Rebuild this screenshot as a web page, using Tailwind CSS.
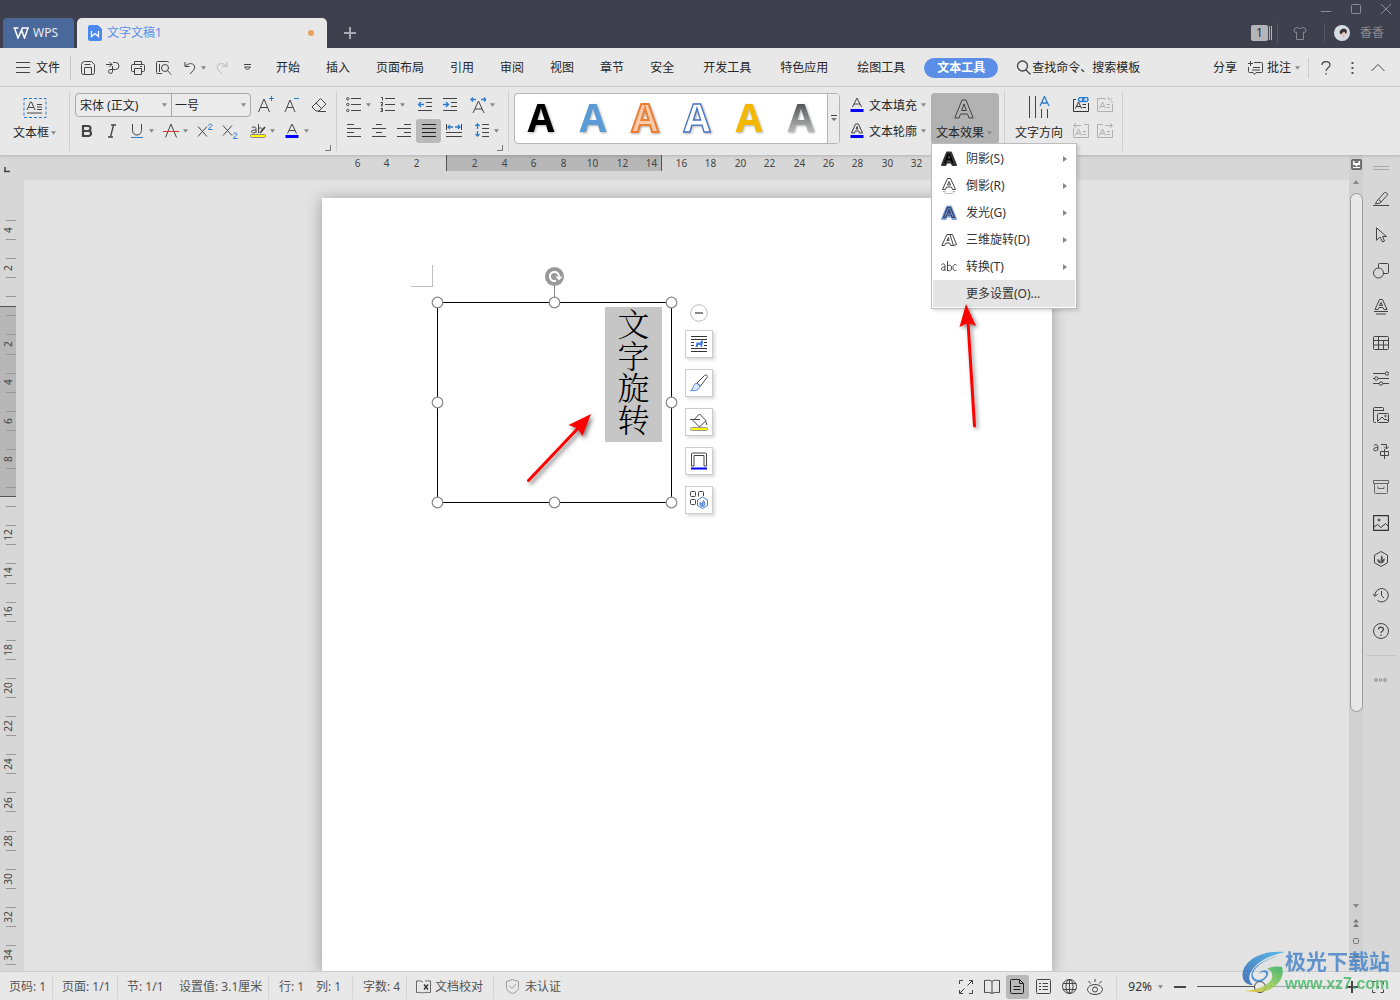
<!DOCTYPE html>
<html lang="zh-CN">
<head>
<meta charset="utf-8">
<title>文字文稿1 - WPS</title>
<script src="https://cdn.jsdelivr.net/npm/@tailwindcss/browser@4"></script>
</head>
<body class="flex h-screen flex-col overflow-hidden bg-[#e2e2e2] fill-none stroke-[#444] font-['Noto_Sans','Noto_Sans_CJK_SC',sans-serif] text-xs leading-4 text-[#262626]">
<svg class="hidden">
  <symbol id="caret" viewBox="0 0 6 4"><path d="M0 0h6L3 4z" fill="#888" stroke="none"/></symbol>
  <symbol id="sub" viewBox="0 0 4 6"><path d="M0 0v6l4-3z" fill="#888" stroke="none"/></symbol>
  <symbol id="corner" viewBox="0 0 6 6"><path d="M5.500 0v5.500H0" fill="none" stroke="#777"/></symbol>
  <symbol id="bigA" viewBox="0 0 20 20"><path d="M8 1h4l7.200 18h-4.200l-1.500-4h-7l-1.500 4H.8zM7.700 11.500h4.600L10 5z"/></symbol>
</svg>

<!-- Title bar -->
<header class="flex h-12 shrink-0 items-end justify-between bg-[#3e414d] text-white">
  <div class="flex items-end pl-[3px]">
    <button class="flex h-[30px] w-[71px] items-center gap-1 rounded-t-[4px] bg-[#4a6899] pl-[10px] text-[#e8ecf4]">
      <svg class="h-3 w-4 stroke-white" viewBox="0 0 16 12" stroke-width="1.500"><path d="M.5 1h5M1.500 1l3.500 10L8.500 3l3 8L15 1h-5.500L6 9"/></svg>
      WPS
    </button>
    <div class="ml-[3px] flex h-[30px] w-[250px] items-center rounded-t-[5px] bg-[#e8e8e8] pr-[13px] pl-[11px] text-[#5b8fe8]">
      <svg class="h-4 w-[14px] stroke-none" viewBox="0 0 14 16"><path d="M2 0h8l4 4v10a2 2 0 0 1-2 2H2a2 2 0 0 1-2-2V2a2 2 0 0 1 2-2z" fill="#4a88f0"/><path d="M3.500 6v5.500L7 8.500l3.500 3V6" fill="none" stroke="#fff" stroke-width="1.300"/></svg>
      <span class="ml-[5px] flex-1">文字文稿1</span>
      <span class="size-[6px] rounded-full bg-[#e8a05c]"></span>
    </div>
    <button class="flex h-[30px] w-[46px] items-center justify-center" aria-label="新建"><svg class="size-3 stroke-[#a9abb3]" viewBox="0 0 12 12" stroke-width="2"><path d="M6 0v12M0 6h12"/></svg></button>
  </div>
  <div class="flex h-full flex-col items-end">
    <div class="flex h-[18px] items-center gap-5 pr-[9px]">
      <button aria-label="最小化"><svg class="size-[10px] stroke-[#8b8d96]" viewBox="0 0 10 10"><path d="M0 7.500h10"/></svg></button>
      <button aria-label="最大化"><svg class="size-[10px] stroke-[#8b8d96]" viewBox="0 0 10 10"><rect x=".5" y=".5" width="9" height="9" rx="1"/></svg></button>
      <button aria-label="关闭"><svg class="size-[10px] stroke-[#8b8d96]" viewBox="0 0 10 10"><path d="M0 0l10 10M10 0L0 10"/></svg></button>
    </div>
    <div class="flex h-[30px] items-center pr-4">
      <span class="flex h-4 items-center"><span class="flex h-4 w-[17px] items-center justify-center rounded-[2px] bg-[#b5b5b9] text-[#333]">1</span><svg class="h-4 w-[5px] stroke-[#b5b5b9]" viewBox="0 0 5 16"><path d="M1.500 1v14M3.500 1v14"/></svg></span>
      <span class="ml-1 h-5 w-px bg-[#565965]"></span>
      <button class="ml-[15px]" aria-label="皮肤"><svg class="size-[14px] stroke-[#85878f]" viewBox="0 0 14 14"><path d="M4.500 1L.8 3.500l1.200 3 1.500-.5v7.500h7V6l1.500.5 1.200-3L9.500 1c-.8 2-4.200 2-5 0z"/></svg></button>
      <span class="ml-[17px] h-5 w-px bg-[#565965]"></span>
      <svg class="ml-[9px] size-4 stroke-none" viewBox="0 0 16 16"><circle cx="8" cy="8" r="8" fill="#d5dde2"/><path d="M5.500 7c1-3 4-4.500 6-3 2 1 1.500 4 .5 5l-1.500-2-2 1-2 1.500z" fill="#3b3438"/><path d="M8.500 7.500l1.500-.5 1 2-1 4-2-1.500z" fill="#e3b9ae"/></svg>
      <span class="ml-[10px] text-[#8b8d96]">香香</span>
    </div>
  </div>
</header>

<!-- Menu bar -->
<nav class="flex h-[39px] shrink-0 items-center border-b border-[#d0d0d0] bg-[#e8e8e8] pt-px pl-4 whitespace-nowrap">
  <button class="flex items-center gap-[6px]"><svg class="size-[14px]" viewBox="0 0 14 14"><path d="M0 1.500h14M0 6.500h14M0 11.500h14"/></svg>文件</button>
  <span class="ml-[10px] h-6 w-px bg-[#c4c4c4]"></span>
  <div class="ml-[10px] flex items-center gap-[11px]">
    <button aria-label="保存"><svg class="size-[14px]" viewBox="0 0 14 14"><path d="M.5 3.500a3 3 0 0 1 3-3h7l3 3v8a2 2 0 0 1-2 2h-9a2 2 0 0 1-2-2zM3.500 13V6.500h7V13M3.500 3.500h6"/></svg></button>
    <button aria-label="输出"><svg class="size-[14px]" viewBox="0 0 14 14"><path d="M0 3.500h6M3.500 1l2.500 2.500L3.500 6M7 1.500h2.500a3.500 3.500 0 0 1 0 7H4a2 2 0 1 0 2.500 2V5"/></svg></button>
    <button aria-label="打印"><svg class="size-[14px]" viewBox="0 0 14 14"><path d="M3.500 3.500v-3h7v3M3.500 10.500h-2a1 1 0 0 1-1-1v-5a1 1 0 0 1 1-1h11a1 1 0 0 1 1 1v5a1 1 0 0 1-1 1h-2M3.500 7.500h7v6h-7zM9 5.500h2"/></svg></button>
    <button aria-label="打印预览"><svg class="h-[14px] w-4" viewBox="0 0 16 14"><path d="M6 12.500H1.500a1 1 0 0 1-1-1v-10a1 1 0 0 1 1-1h10a1 1 0 0 1 1 1M3.500 3v8"/><circle cx="9" cy="7" r="3.500"/><path d="M11.500 9.500l3.500 4"/></svg></button>
  </div>
  <button class="ml-3 flex items-center gap-[5px]" aria-label="撤销"><svg class="size-3" viewBox="0 0 12 12"><path d="M1 0v4.500h4.500M1 4.500C4 1 9 .5 10.500 4c1 3-2 5-4.500 8"/></svg><svg class="h-1 w-[5px]"><use href="#caret"/></svg></button>
  <button class="ml-[10px]" aria-label="恢复"><svg class="size-3 stroke-[#bbb]" viewBox="0 0 12 12"><path d="M11 0v4.500H6.500M11 4.500C8 1 3 .5 1.500 4c-1 3 2 5 4.500 8"/></svg></button>
  <button class="ml-[15px]" aria-label="自定义"><svg class="h-[7px] w-[9px]" viewBox="0 0 9 7"><path d="M1 .5h7M1.500 3l3 3 3-3z"/></svg></button>
  <div class="ml-[24px] flex gap-[26px]"><button>开始</button><button>插入</button><button>页面布局</button><button>引用</button><button>审阅</button><button>视图</button><button>章节</button><button>安全</button></div>
  <div class="ml-[29px] flex gap-[29px]"><button>开发工具</button><button>特色应用</button><button>绘图工具</button></div>
  <button class="ml-[19px] h-5 w-[74px] rounded-full bg-[#5b8ee6] font-bold text-white">文本工具</button>
  <button class="ml-[18px] flex items-center gap-[1px]"><svg class="size-[15px]" viewBox="0 0 15 15" stroke-width="1.300"><circle cx="6.500" cy="6" r="5"/><path d="M10 10l4.500 4.500"/></svg>查找命令、搜索模板</button>
  <div class="ml-auto flex items-center pr-[15px]">
    <button>分享</button>
    <button class="ml-[11px] flex items-center gap-1"><svg class="h-[14px] w-[15px]" viewBox="0 0 15 14"><path d="M6 1.500h7.500a1 1 0 0 1 1 1v8a1 1 0 0 1-1 1H8l-1.500 2-1.500-2H1.500a1 1 0 0 1-1-1V6M0 2.500h5M2.500 0v5M5 6.500h7M4 9h8"/></svg>批注<svg class="h-1 w-[5px]"><use href="#caret"/></svg></button>
    <span class="ml-2 h-5 w-px bg-[#ccc]"></span>
    <button class="ml-[12px]" aria-label="帮助"><svg class="h-[14px] w-[10px]" viewBox="0 0 10 14" stroke-width="1.200"><path d="M1 4c0-4.500 8-4.500 8 0 0 2.500-4 3-4 6"/><path d="M5 12v1.500"/></svg></button>
    <button class="ml-5" aria-label="更多"><svg class="h-3 w-[3px] fill-[#555] stroke-none" viewBox="0 0 3 12"><path d="M.5 0h2v2h-2zM.5 5h2v2h-2zM.5 10h2v2h-2z"/></svg></button>
    <button class="ml-[17px]" aria-label="折叠功能区"><svg class="h-[9px] w-[14px]" viewBox="0 0 14 9"><path d="M.5 8L7 1.500 13.500 8"/></svg></button>
  </div>
</nav>

<!-- Ribbon -->
<section class="relative z-10 flex h-[68px] shrink-0 bg-[#e8e8e8] whitespace-nowrap shadow-[0_1px_3px_#0000002a]">
  <button class="flex w-[69px] flex-col items-center pt-[11px]">
    <svg class="h-5 w-6" viewBox="0 0 24 20"><rect x="1" y=".5" width="22" height="19" stroke="#2b7cd0" stroke-dasharray="3 2"/><path d="M4 12l3.500-8h1L12 12M5.500 9.500h5M14 6.500h5M14 9h5M14 11.500h5M4 15h15"/></svg>
    <span class="mt-[7px] flex items-center gap-[2px]">文本框<svg class="h-1 w-[5px]"><use href="#caret"/></svg></span>
  </button>
  <span class="my-1 w-px bg-[#cfcfcf]"></span>
  <div class="flex w-[266px] flex-col pt-[5px] pl-[5px]">
    <div class="flex h-[26px] items-center">
      <div class="flex h-6 w-[176px] rounded-[4px] border border-[#a8a8a8] bg-[#ebebeb]">
        <label class="flex w-24 items-center border-r border-[#a8a8a8] pr-1"><select aria-label="字体" class="min-w-0 flex-1 appearance-none bg-transparent pt-px pl-1 outline-none"><option>宋体 (正文)</option></select><svg class="h-1 w-[5px]"><use href="#caret"/></svg></label>
        <label class="flex flex-1 items-center pr-1"><select aria-label="字号" class="min-w-0 flex-1 appearance-none bg-transparent pt-px pl-[3px] outline-none"><option>一号</option></select><svg class="h-1 w-[5px]"><use href="#caret"/></svg></label>
      </div>
      <button class="ml-[2px] flex w-[26px] justify-center" aria-label="增大字号"><svg class="size-4 overflow-visible" viewBox="0 0 16 16"><path d="M.5 15L6 2l5.500 13M2.500 10.500h7"/><path d="M11 1.500h5M13.500-1v5" stroke="#2b7cd0"/></svg></button>
      <button class="flex w-[26px] justify-center" aria-label="减小字号"><svg class="size-4" viewBox="0 0 16 16"><path d="M1 15L6 3l5 12M3 10.500h6"/><path d="M10 1.500h5" stroke="#2b7cd0"/></svg></button>
      <button class="flex w-[28px] justify-center" aria-label="清除格式"><svg class="size-4" viewBox="0 0 16 16"><path d="M9.500 1.500l5.500 5.500-7 7H5L1 10zM5 6l5.500 5.500M7 14.500h8"/></svg></button>
    </div>
    <div class="flex h-[26px] items-center">
      <button class="flex w-6 justify-center" aria-label="加粗"><svg class="size-4" viewBox="0 0 16 16" stroke-width="2.200"><path d="M4 3h5a2.300 2.300 0 0 1 0 5H4zM4 8h5.500a2.500 2.500 0 0 1 0 5H4z"/></svg></button>
      <button class="flex w-[25px] justify-center" aria-label="倾斜"><svg class="size-4" viewBox="0 0 16 16" stroke-width="1.300"><path d="M7 2h5M4 14h5M9.500 2l-3 12"/></svg></button>
      <button class="flex w-[34px] items-center justify-center gap-1" aria-label="下划线"><svg class="size-4" viewBox="0 0 16 16"><path d="M3.500 1v6.500a4.500 4.500 0 0 0 9 0V1"/><path d="M2 14.500h12" stroke="#2b7cd0"/></svg><svg class="h-1 w-[5px]"><use href="#caret"/></svg></button>
      <button class="flex w-[34px] items-center justify-center gap-1" aria-label="删除线"><svg class="size-4" viewBox="0 0 16 16"><path d="M2.500 14.500L8 1l5.500 13.500"/><path d="M0 8.500h16" stroke="#d33"/></svg><svg class="h-1 w-[5px]"><use href="#caret"/></svg></button>
      <button class="flex w-[25px] justify-center" aria-label="上标"><svg class="size-4" viewBox="0 0 16 16"><path d="M1 3.500l9 10M10 3.500l-9 10"/><path d="M11.500 2.500c0-2 3.500-2 3.500 0 0 1-3.500 2-3.500 4H15.500" stroke="#2b7cd0"/></svg></button>
      <button class="flex w-[25px] justify-center" aria-label="下标"><svg class="size-4" viewBox="0 0 16 16"><path d="M1 2.500l9 10M10 2.500l-9 10"/><path d="M11.500 11.500c0-2 3.500-2 3.500 0 0 1-3.500 2-3.500 4H15.500" stroke="#2b7cd0"/></svg></button>
      <button class="ml-[3px] flex w-[34px] items-center justify-center gap-1" aria-label="突出显示"><svg class="size-4" viewBox="0 0 16 16"><path d="M2 5c0-1.500 4-1.500 4 .5V10M6 7C4 7 1.500 7 1.500 8.700 1.500 10.500 5 10.500 6 8.500M8.500 1v9M8.500 6c1-2 4-1.500 4 1.500"/><path d="M15 4l-5 6" stroke-width="1.800"/><rect x=".5" y="11.500" width="15" height="3" rx="1" fill="#ff0" stroke="#888"/></svg><svg class="h-1 w-[5px]"><use href="#caret"/></svg></button>
      <button class="flex w-[34px] items-center justify-center gap-1" aria-label="字体颜色"><svg class="size-4" viewBox="0 0 16 16"><path d="M3.500 10.500L8 1l4.500 9.500M5 7.500h6"/><path d="M1.500 13.500h13" stroke="#00f" stroke-width="3"/></svg><svg class="h-1 w-[5px]"><use href="#caret"/></svg></button>
    </div>
    <svg class="mt-px mr-[5px] size-[6px] self-end"><use href="#corner"/></svg>
  </div>
  <span class="my-1 w-px bg-[#cfcfcf]"></span>
  <div class="flex w-[171px] flex-col pt-[5px] pl-1">
    <div class="flex h-[26px] items-center">
      <button class="flex w-[34px] items-center justify-center gap-1" aria-label="项目符号"><svg class="size-4" viewBox="0 0 16 16"><path d="M5 1.500h10M5 7.500h10M5 13.500h10"/><circle cx="1.800" cy="1.800" r="1.200"/><circle cx="1.800" cy="7.500" r="1.200"/><circle cx="1.800" cy="13.500" r="1.200"/></svg><svg class="h-1 w-[5px]"><use href="#caret"/></svg></button>
      <button class="flex w-[34px] items-center justify-center gap-1" aria-label="编号"><svg class="size-4" viewBox="0 0 16 16"><path d="M5 1.500h10M5 7.500h10M5 13.500h10M1 .5h1.500v3M.5 5.500h2v2h-1v1.500h1.500M.5 11.500h2v3h-2M1 13h1.500"/></svg><svg class="h-1 w-[5px]"><use href="#caret"/></svg></button>
      <button class="ml-[3px] flex w-[25px] justify-center" aria-label="减少缩进"><svg class="size-4" viewBox="0 0 16 16"><path d="M1 1.500h14M9 5.500h6M9 9.500h6M1 13.500h14"/><path d="M7 7.500H1.500M4 5L1.500 7.500 4 10" stroke="#2b7cd0" stroke-width="1.300"/></svg></button>
      <button class="flex w-[25px] justify-center" aria-label="增加缩进"><svg class="size-4" viewBox="0 0 16 16"><path d="M1 1.500h14M9 5.500h6M9 9.500h6M1 13.500h14"/><path d="M1 7.500h5.500M4 5l2.500 2.500L4 10" stroke="#2b7cd0" stroke-width="1.300"/></svg></button>
      <button class="ml-[3px] flex w-[34px] items-center justify-center gap-1" aria-label="字符缩放"><svg class="size-4" viewBox="0 0 16 16"><path d="M3 16L8.500 4 14 16M5 12h7"/><path d="M6 2.500H1M3 .5l-2 2 2 2M11 2.500h5M14 .5l2 2-2 2" stroke="#2b7cd0" stroke-width="1.300"/></svg><svg class="h-1 w-[5px]"><use href="#caret"/></svg></button>
    </div>
    <div class="flex h-[26px] items-center">
      <button class="flex w-[25px] justify-center" aria-label="左对齐"><svg class="size-4" viewBox="0 0 16 16"><path d="M1 1.500h7M1 5.500h14M1 9.500h7M1 13.500h14"/></svg></button>
      <button class="flex w-[25px] justify-center" aria-label="居中"><svg class="size-4" viewBox="0 0 16 16"><path d="M5 1.500h6M1 5.500h14M5 9.500h6M1 13.500h14"/></svg></button>
      <button class="flex w-[25px] justify-center" aria-label="右对齐"><svg class="size-4" viewBox="0 0 16 16"><path d="M8 1.500h7M1 5.500h14M8 9.500h7M1 13.500h14"/></svg></button>
      <button class="flex h-6 w-[25px] items-center justify-center rounded-[3px] bg-[#b9b9b9] stroke-[#222]" aria-label="两端对齐"><svg class="size-4" viewBox="0 0 16 16"><path d="M1 1.500h14M1 5.500h14M1 9.500h14M1 13.500h14"/></svg></button>
      <button class="flex w-[25px] justify-center" aria-label="分散对齐"><svg class="size-4" viewBox="0 0 16 16"><path d="M.5 1v6M15.500 1v6M0 9.500h16M0 13.500h16"/><path d="M7 4H2M4 2L2 4l2 2M9 4h5M12 2l2 2-2 2" stroke="#2b7cd0" stroke-width="1.300"/></svg></button>
      <button class="ml-[3px] flex w-[34px] items-center justify-center gap-1" aria-label="行距"><svg class="size-4" viewBox="0 0 16 16"><path d="M8 1.500h7M8 5.500h7M8 9.500h7M8 13.500h7"/><path d="M3.500 1v5M1.500 3l2-2 2 2M3.500 8v5M1.500 11l2 2 2-2" stroke="#2b7cd0" stroke-width="1.300"/></svg><svg class="h-1 w-[5px]"><use href="#caret"/></svg></button>
    </div>
    <svg class="mt-px mr-[5px] size-[6px] self-end"><use href="#corner"/></svg>
  </div>
  <span class="my-1 w-px bg-[#cfcfcf]"></span>
  <div class="mt-[6px] ml-[5px] flex h-[51px] w-[326px] rounded-[4px] border border-[#b5b5b5] bg-white">
    <svg class="h-[49px] w-[312px] overflow-visible font-['Open_Sans'] text-[39px] font-bold drop-shadow-[1px_1px_1px_#00000050]" viewBox="0 0 312 49" text-anchor="middle">
      <defs><linearGradient id="gray" x1="0" y1="0" x2="0" y2="1"><stop offset=".25" stop-color="#505254"/><stop offset=".8" stop-color="#bbb"/></linearGradient></defs>
      <g stroke="none"><text x="26" y="38" fill="#000">A</text><text x="78" y="38" fill="#5b9bd5">A</text><text x="130" y="38" fill="#f8cbad" stroke="#ed7d31" stroke-width="2">A</text><text x="182" y="38" fill="#fff" stroke="#4472c4" stroke-width="1.300">A</text><text x="234" y="38" fill="#f5b800">A</text><text x="286" y="38" fill="url(#gray)">A</text></g>
    </svg>
    <button class="flex flex-1 items-center justify-center rounded-r-[3px] border-l border-[#b5b5b5] bg-[#ebebeb]" aria-label="更多样式"><svg class="h-[7px] w-[6px]" viewBox="0 0 6 7"><path d="M0 .5h6"/><path d="M0 3h6L3 6z" fill="#777" stroke="none"/></svg></button>
  </div>
  <div class="flex w-[91px] flex-col pt-[5px] pl-[10px]">
    <button class="flex h-[26px] items-center"><svg class="h-4 w-[14px]" viewBox="0 0 14 16"><path d="M2.500 10L7 1l4.500 9M4 7h6"/><path d="M.5 13.500h13" stroke="#00f" stroke-width="3"/></svg><span class="mr-1 ml-[5px] pt-px">文本填充</span><svg class="h-1 w-[5px]"><use href="#caret"/></svg></button>
    <button class="flex h-[26px] items-center"><svg class="h-4 w-[14px]" viewBox="0 0 14 16"><path d="M1.500 10L5.500 1h3l4 9h-3L8.800 8H5.200l-.7 2zM6 6h2L7 3.500z"/><path d="M.5 13.500h13" stroke="#00f" stroke-width="3"/></svg><span class="mr-1 ml-[5px] pt-px">文本轮廓</span><svg class="h-1 w-[5px]"><use href="#caret"/></svg></button>
  </div>
  <div class="relative mt-[6px] w-[68px]">
    <button class="flex h-[51px] w-full flex-col items-center rounded-[4px] bg-[#b2b2b2] pt-[6px] pr-[2px]" aria-expanded="true">
      <svg class="size-5"><use href="#bigA"/></svg>
      <span class="mt-[6px] flex items-center">文本效果<svg class="ml-[3px] h-1 w-[5px]"><use href="#caret"/></svg></span>
    </button>
    <ul class="absolute top-[50px] left-0 z-20 w-[146px] border border-[#bdbdbd] bg-white p-px text-[#333] shadow-[2px_2px_3px_#00000022]" role="menu">
      <li><button class="flex h-[27px] w-full items-center pr-2 pl-2"><svg class="mr-[9px] size-4 fill-[#555] stroke-[#333]" viewBox="0 0 16 16"><path d="M6 1.500h4l5 12.500h-3.500l-1-2.500h-5l-1 2.500H1z" stroke-width="2" stroke-linejoin="round"/><path d="M6.500 2.500h2.500l4 10h-2l-1.200-3H5.700l-1.200 3H2.700zM6.500 7.500h3L8 4z" fill="#000" stroke="none"/></svg><span class="flex-1 text-left">阴影(S)</span><svg class="h-[6px] w-1"><use href="#sub"/></svg></button></li>
      <li><button class="flex h-[27px] w-full items-center pr-2 pl-2"><svg class="mr-[9px] size-4" viewBox="0 0 16 16"><path d="M6.500.5h3l5 11h-3L10.500 9h-5l-1 2.500h-3zM6.500 7h3L8 3.500z"/><path d="M1.500 13.500h3l-1 2M14.500 13.500h-3l1 2M5 15.500h6" stroke="#bbb"/></svg><span class="flex-1 text-left">倒影(R)</span><svg class="h-[6px] w-1"><use href="#sub"/></svg></button></li>
      <li><button class="flex h-[27px] w-full items-center pr-2 pl-2"><svg class="mr-[9px] size-4 fill-[#7f9fdc] stroke-[#7f9fdc]" viewBox="0 0 16 16"><path d="M6 1.500h4l5 12.500h-3.500l-1-2.500h-5l-1 2.500H1z" stroke-width="2" stroke-linejoin="round"/><path d="M6.500 2.500h3l4 10h-2.300l-1-2.500H5.800l-1 2.500H2.500zM6.500 7.800h3L8 4.300z" stroke="#2f3f60" stroke-width="1.200"/></svg><span class="flex-1 text-left">发光(G)</span><svg class="h-[6px] w-1"><use href="#sub"/></svg></button></li>
      <li><button class="flex h-[27px] w-full items-center pr-2 pl-2"><svg class="mr-[9px] size-4" viewBox="0 0 16 16"><path d="M6 2.500h3l3.500 11H9.500l-.8-2.500H5L3.500 13.500H.8zM6 8.500h2L7.500 5.500zM9 2.500h2.500l4 10-3 1"/></svg><span class="flex-1 text-left">三维旋转(D)</span><svg class="h-[6px] w-1"><use href="#sub"/></svg></button></li>
      <li><button class="flex h-[27px] w-full items-center pr-2 pl-2"><svg class="mr-[9px] size-4" viewBox="0 0 16 16"><path d="M.5 5.500c1-1 3.500-1 3.500 1V12M4 8C2 8 .5 8.500.5 10s2.500 2 3.500 0M6.500 2v10M6.500 7.500c1-2 4-2 4 1.500s-3 3.500-4 1.500M15.500 6c-3-1.500-3.500 1-3.500 3s1.500 3.500 3.500 2"/></svg><span class="flex-1 text-left">转换(T)</span><svg class="h-[6px] w-1"><use href="#sub"/></svg></button></li>
      <li><button class="flex h-[27px] w-full items-center bg-[#e4e4e4] pl-[33px]">更多设置(O)...</button></li>
    </ul>
    <svg class="pointer-events-none absolute top-[209px] left-[23px] z-30 h-[128px] w-8 drop-shadow-[2px_2px_2px_#00000070]" viewBox="0 0 32 128"><path d="M20.500 124L14 20" stroke="#f00" stroke-width="3" stroke-linecap="round"/><path d="M12 2l10 22-8-3-8.500 4z" fill="#f00" stroke="none"/></svg>
  </div>
  <span class="my-1 ml-[5px] w-px bg-[#cfcfcf]"></span>
  <button class="flex w-[68px] flex-col items-center pt-[9px]">
    <svg class="h-[22px] w-[22px]" viewBox="0 0 22 22"><path d="M1.500 0v22M7.500 0v22M13.500 13v9M19.500 13v9"/><path d="M12 10l4.500-9.500L21 10M13.500 7h6" stroke="#2b7cd0" stroke-width="1.300"/></svg>
    <span class="mt-[7px]">文字方向</span>
  </button>
  <div class="grid h-[57px] w-12 grid-cols-2 grid-rows-2 pt-[5px]">
    <button class="flex items-center" aria-label="创建文本框链接"><svg class="size-4 stroke-[#333]" viewBox="0 0 16 16"><path d="M3 2.500H.5v12h15V6M2.500 11.500L5.500 5l3 6.500M3.500 9.500h4M9.500 7.500h3.500M9.500 10.500h3.500"/><rect x="5.500" y=".5" width="5.500" height="4" rx="2" stroke="#2b7cd0" stroke-width="1.300"/><rect x="9.500" y=".5" width="5.500" height="4" rx="2" stroke="#2b7cd0" stroke-width="1.300"/></svg></button>
    <button class="flex items-center" aria-label="断开链接"><svg class="size-4 stroke-[#b0b0b0]" viewBox="0 0 16 16"><path d="M9 1.500H.5v13h15V7M2.500 11.500L5.500 5l3 6.500M3.500 9.500h4M9.500 7.500h3.500M9.500 10.500h3.500M11 0l1 3M15 1l-2 2.500M16 5h-2.500"/></svg></button>
    <button class="flex items-center" aria-label="前一文本框"><svg class="size-4 stroke-[#b0b0b0]" viewBox="0 0 16 16"><path d="M.5 5.500v9h15v-13H11M2.500 12.500L5.500 6l3 6.500M3.500 10.500h4M9.500 8.500h3.500M9.500 11.500h3.500M8 2.500H.5M3 0L.5 2.500 3 5"/></svg></button>
    <button class="flex items-center" aria-label="下一文本框"><svg class="size-4 stroke-[#b0b0b0]" viewBox="0 0 16 16"><path d="M15.500 7v7.500H.5v-13H6M2.500 12.500L5.500 6l3 6.500M3.500 10.500h4M9.500 8.500h3.500M9.500 11.500h3.500M8 2.500h7.500M13 0l2.500 2.500L13 5"/></svg></button>
  </div>
  <span class="my-1 ml-px w-px bg-[#cfcfcf]"></span>
</section>

<!-- Workspace -->
<main class="flex min-h-0 flex-1">
  <!-- Vertical ruler -->
  <div id="vruler" class="relative w-6 shrink-0 overflow-hidden bg-[#d7d7d7] text-[10px] text-[#444]">
    <svg class="mt-[12px] ml-1 h-[6px] w-[6px]" viewBox="0 0 6 6"><path d="M1 0v5M0 4.500h6" stroke-width="1.500"/></svg>
    <div class="absolute top-[151px] left-0 h-[191px] w-4 border-y border-[#555] bg-[#b7b7b7]"></div>
  </div>

  <div class="flex min-w-0 flex-1 flex-col">
    <!-- Horizontal ruler -->
    <div class="h-[25px] shrink-0 bg-[#d7d7d7] text-[10px] text-[#444]">
      <div id="hruler" class="relative mx-auto h-4 w-[730px]">
        <div class="absolute top-0 left-[124px] h-4 w-[216px] border-x border-[#555] bg-[#b7b7b7]"></div>
      </div>
    </div>
    <!-- Document -->
    <div class="min-h-0 flex-1 overflow-hidden pt-[18px]">
      <article class="relative mx-auto h-full w-[730px] bg-white shadow-[0_2px_14px_1px_#00000048]">
        <div class="absolute top-[67px] left-[89px] h-[22px] w-[22px] border-r border-b border-[#c0c0c0]"></div>
        <!-- Text box with its handles -->
        <div class="absolute top-[104px] left-[115px] h-[201px] w-[235px] border border-black">
          <div class="absolute top-1 right-[9px] flex h-[135px] w-[57px] items-center bg-[#c6c6c6]">
            <p class="h-[134px] w-[57px] font-['Noto_Serif_CJK_SC','Noto_Sans_CJK_SC',serif] text-[32px] leading-[57px] font-light text-black [writing-mode:vertical-rl]">文字旋转</p>
          </div>
          <svg class="absolute -top-[37px] left-[106px] h-[37px] w-[21px]" viewBox="0 0 21 37"><path d="M10.500 20v17" stroke="#888"/><circle cx="10.500" cy="10.500" r="9.500" fill="#999" stroke="none"/><path d="M12 14.800a4.600 4.600 0 1 1 3-4.300" stroke="#fff" stroke-width="2"/><path d="M11.500 10.500h7L15 14.500z" fill="#fff" stroke="none"/></svg>
          <svg class="absolute -top-[7px] -left-[7px] h-[213px] w-[247px] fill-white stroke-[#888]" viewBox="0 0 247 213" stroke-width="1.200"><circle cx="6.500" cy="6.500" r="5.300"/><circle cx="123.500" cy="6.500" r="5.300"/><circle cx="240.500" cy="6.500" r="5.300"/><circle cx="6.500" cy="106.500" r="5.300"/><circle cx="240.500" cy="106.500" r="5.300"/><circle cx="6.500" cy="206.500" r="5.300"/><circle cx="123.500" cy="206.500" r="5.300"/><circle cx="240.500" cy="206.500" r="5.300"/></svg>
        </div>
        <svg class="pointer-events-none absolute top-[212px] left-[202px] h-[78px] w-[72px] drop-shadow-[2px_3px_2px_#00000080]" viewBox="0 0 72 78"><path d="M4.500 70.500L58 14" stroke="#f00" stroke-width="3" stroke-linecap="round"/><path d="M67 4L58.500 26l-5-7.500-9-3.500z" fill="#f00" stroke="none"/></svg>
        <!-- Floating tools -->
        <div class="absolute top-[106px] left-[363px] flex w-7 flex-col items-center gap-[11px]">
          <button class="-mb-[3px] size-[18px]" aria-label="收起"><svg class="size-[18px]" viewBox="0 0 18 18"><circle cx="9" cy="9" r="8.300" stroke="#bbb"/><path d="M5 9h8" stroke="#888" stroke-width="2"/></svg></button>
          <button class="flex size-7 shrink-0 items-center justify-center border border-[#ccc] bg-white shadow-[2px_2px_3px_#00000026]" aria-label="环绕方式"><svg class="h-4 w-[18px] stroke-[#333]" viewBox="0 0 18 16"><path d="M1 .5h16M1 3.500h16M1 6.500h3M1 9.500h3M14 6.500h3M14 9.500h3M1 12.500h16M1 15.500h16"/><path d="M5.500 11l1-4.500H10l1.500-2h1.500v2L12 11h-1.500V9H8v2z" fill="#4a80dc" stroke="none"/></svg></button>
          <button class="flex size-7 shrink-0 items-center justify-center border border-[#ccc] bg-white shadow-[2px_2px_3px_#00000026]" aria-label="形状样式"><svg class="size-[18px]" viewBox="0 0 18 18"><path d="M7 9l7.500-7.500c2-1.500 3.500.5 2.500 2L10.500 12z"/><path d="M7 9.500C3 9 4.500 13.500.8 16.500c4 .5 8.500 0 9.200-4.500z" fill="#dceafd" stroke="#4a80dc"/></svg></button>
          <button class="flex size-7 shrink-0 items-center justify-center border border-[#ccc] bg-white shadow-[2px_2px_3px_#00000026]" aria-label="形状填充"><svg class="size-[18px]" viewBox="0 0 18 18"><path d="M0 6.500h10M3 7.500L9.500 1l6.500 6.500L9.500 14zM15.500 8l1.500 4"/><rect x=".5" y="14.500" width="17" height="3" rx="1" fill="#ff0" stroke="#999"/></svg></button>
          <button class="flex size-7 shrink-0 items-center justify-center border border-[#ccc] bg-white shadow-[2px_2px_3px_#00000026]" aria-label="形状轮廓"><svg class="size-[18px]" viewBox="0 0 18 18"><path d="M1.500 14V2a1 1 0 0 1 1-1h13a1 1 0 0 1 1 1v12H14V3.500H4V14z"/><path d="M1 16.500h16" stroke="#00f" stroke-width="2"/></svg></button>
          <button class="flex size-7 shrink-0 items-center justify-center border border-[#ccc] bg-white shadow-[2px_2px_3px_#00000026]" aria-label="更多形状"><svg class="size-[18px]" viewBox="0 0 18 18"><rect x=".5" y=".5" width="5" height="5" rx="1"/><path d="M8.500 5.500v-4a1 1 0 0 1 1-1h3a1 1 0 0 1 1 1V5"/><rect x=".5" y="8.500" width="5" height="5" rx="1"/><path d="M12.500 6l5 3v5.500l-5 3-5-3V9z" stroke="#4a80dc"/><path d="M12.500 15.500c-3 0-3-3-2.500-4 1.500.5 2.500 2 2.500 4 0-3 0-4.500 1-6 1.500 2 2.500 5.500-1 6z" fill="#9dbcf0" stroke="#4a80dc"/></svg></button>
        </div>
      </article>
    </div>
  </div>

  <!-- Scroll bar -->
  <div class="flex w-[14px] shrink-0 flex-col items-center bg-[#d0d0d0]">
    <svg class="mt-1 size-[11px] shrink-0" viewBox="0 0 11 11"><rect x=".5" y=".5" width="10" height="10" rx="1" fill="#777" stroke="#666"/><path d="M2 2h1.500v2h4V2H9v4H7L5.500 7.500 4 6H2zM2 8h7v1H2z" fill="#fff" stroke="none"/></svg>
    <svg class="mt-[10px] h-1 w-[6px] shrink-0 rotate-180"><use href="#caret"/></svg>
    <div class="mt-[9px] h-[519px] w-[13px] rounded-full border border-[#999] bg-[#e8e8e8]"></div>
    <div class="mt-auto flex flex-col items-center gap-[11px] pb-2">
      <svg class="h-1 w-[6px]"><use href="#caret"/></svg>
      <svg class="h-2 w-[6px] fill-[#777] stroke-none" viewBox="0 0 6 8"><path d="M3 0l3 3.500H0zM3 4.500L6 8H0z"/></svg>
      <svg class="size-[6px] stroke-[#777]" viewBox="0 0 6 6"><rect x=".5" y=".5" width="5" height="5" rx="1"/></svg>
      <svg class="h-2 w-[6px] fill-[#777] stroke-none" viewBox="0 0 6 8"><path d="M0 0h6L3 3.500zM0 4.500h6L3 8z"/></svg>
    </div>
  </div>

  <!-- Task pane -->
  <aside class="flex w-[37px] shrink-0 flex-col items-center bg-[#d7d7d7] pr-[2px]">
    <svg class="mt-[11px] mb-[10px] h-[5px] w-4 stroke-[#aaa]" viewBox="0 0 16 5"><path d="M0 .5h16M0 3.500h16"/></svg>
    <button class="flex h-9 w-full items-center justify-center" aria-label="快捷"><svg class="size-4" viewBox="0 0 16 16"><path d="M3.500 10.500L11 2c1.500-1.500 4.500.5 3 2.500L7 12l-4.500 1zM5.500 8.500l3 2.500M0 14.500h16"/></svg></button>
    <button class="flex h-9 w-full items-center justify-center" aria-label="选择"><svg class="size-4" viewBox="0 0 16 16"><path d="M3.500.8v12.500L7 10l2.500 5 2-1-2-4.500h4z"/></svg></button>
    <button class="flex h-9 w-full items-center justify-center" aria-label="形状"><svg class="size-4" viewBox="0 0 16 16"><circle cx="5.500" cy="10" r="5"/><path d="M5.500 5V1.500a1 1 0 0 1 1-1h8a1 1 0 0 1 1 1v8a1 1 0 0 1-1 1h-4"/></svg></button>
    <button class="flex h-9 w-full items-center justify-center" aria-label="样式"><svg class="size-4" viewBox="0 0 16 16"><path d="M6.500.5h3L14 10.500h-3L10 8.500H6l-1 2H2zM6.500 6.500h3L8 3.500zM1 12.500h14M3 15h10"/></svg></button>
    <button class="flex h-9 w-full items-center justify-center" aria-label="表格"><svg class="size-4" viewBox="0 0 16 16"><rect x=".5" y="1.500" width="15" height="13" rx="1"/><path d="M.5 5.500h15M.5 10h15M5.500 1.500v13M10.500 5.500v9"/></svg></button>
    <button class="flex h-9 w-full items-center justify-center" aria-label="属性"><svg class="size-4" viewBox="0 0 16 16"><path d="M0 2.500h12M0 7.500h1.500M5 7.500h11M0 12.500h6M10 12.500h6"/><circle cx="14" cy="2.500" r="1.700"/><circle cx="3.300" cy="7.500" r="1.700"/><circle cx="8" cy="12.500" r="1.700"/></svg></button>
    <button class="flex h-9 w-full items-center justify-center" aria-label="图库"><svg class="size-4" viewBox="0 0 16 16"><path d="M3 15.500H1.500a1 1 0 0 1-1-1v-13a1 1 0 0 1 1-1h8a1 1 0 0 1 1 1V4M.5 3.500h10"/><rect x="4.500" y="6.500" width="11" height="9" rx="1"/><path d="M5 14l4-4 3 3 1-1 2.500 2.500"/><circle cx="12.500" cy="9" r=".8"/></svg></button>
    <button class="flex h-9 w-full items-center justify-center" aria-label="翻译"><svg class="size-4" viewBox="0 0 16 16"><path d="M.8 2.500c1-1.300 4-1.200 4 .8v4.200M4.800 4.500C2.500 4.500.5 5 .5 6.500s3 2 4.300 0M8 1.500h5.500v4M11 3.500l2.500 2.500L16 3.500M7.500 8.500h8v4h-8zM11.500 6v10"/></svg></button>
    <button class="flex h-9 w-full items-center justify-center" aria-label="归档"><svg class="size-4 stroke-[#666]" viewBox="0 0 16 16"><path d="M.5 1.500h15v3H.5zM1.500 4.500v9a1 1 0 0 0 1 1h11a1 1 0 0 0 1-1v-9M5 7.500v2h6v-2"/></svg></button>
    <button class="flex h-9 w-full items-center justify-center" aria-label="图片"><svg class="size-4 stroke-[#333]" viewBox="0 0 16 16"><rect x=".5" y=".5" width="15" height="15" rx="1" stroke-width="1.300"/><circle cx="6" cy="5" r="1"/><path d="M1 12l3.500-2.500L8 12.500l4.500-4 3 3"/></svg></button>
    <button class="flex h-9 w-full items-center justify-center" aria-label="稻壳"><svg class="size-4" viewBox="0 0 16 16"><path d="M8 .5l6.500 3.700v7.600L8 15.500l-6.500-3.700V4.200z"/><path d="M8 12.500c-3.500-.5-4-3-3.500-4.500 2 .5 3 2 3.500 4.500-.5-3-.5-6 .5-8.500 1.500 1.500 1.500 3 1 5L11.500 7c.5 3-.5 5-3.500 5.500z" fill="#555" stroke="none"/></svg></button>
    <button class="flex h-9 w-full items-center justify-center" aria-label="历史"><svg class="size-4" viewBox="0 0 16 16"><path d="M2 9a6.700 6.700 0 1 1 2.500 4.500M0 7l2 2.500L4.500 7M8.500 4v4.500L11 11"/></svg></button>
    <button class="flex h-9 w-full items-center justify-center" aria-label="帮助"><svg class="size-4" viewBox="0 0 16 16"><circle cx="8" cy="8" r="7.500"/><path d="M5.500 6.500c0-3.300 5-3.300 5 0C10.500 8 8 8 8 10M8 11.500V13" stroke-width="1.200"/></svg></button>
    <span class="mt-[6px] h-px w-[30px] bg-[#c6c6c6]"></span>
    <button class="mt-[22px]" aria-label="更多"><svg class="h-1 w-[13px] stroke-[#888]" viewBox="0 0 13 4"><circle cx="2" cy="2" r="1.300"/><circle cx="6.500" cy="2" r="1.300"/><circle cx="11" cy="2" r="1.300"/></svg></button>
  </aside>
</main>

<!-- Status bar -->
<footer class="relative flex h-[29px] shrink-0 items-center border-t border-[#ccc] bg-[#e8e8e8] pt-px pl-[9px] whitespace-nowrap text-[#555]">
  <span class="w-[43px]">页码: 1</span><span class="h-6 w-px bg-[#d5d5d5]"></span>
  <span class="w-16 pl-[9px]">页面: 1/1</span><span class="h-6 w-px bg-[#d5d5d5]"></span>
  <span class="w-[61px] pl-[9px]">节: 1/1</span><span class="w-[89px]">设置值: 3.1厘米</span><span class="h-6 w-px bg-[#d5d5d5]"></span>
  <span class="w-[47px] pl-[10px]">行: 1</span><span class="w-9">列: 1</span><span class="h-6 w-px bg-[#d5d5d5]"></span>
  <span class="w-[53px] pl-[10px]">字数: 4</span><span class="h-6 w-px bg-[#d5d5d5]"></span>
  <button class="flex w-[86px] items-center gap-1 pl-[9px]"><svg class="h-[14px] w-[15px] stroke-[#666]" viewBox="0 0 15 14"><path d="M7 2C5 .5 2.500 1 .5 1v11.500c2 0 4.500-.5 6.500.5 2-1 5-.5 7.500-.5V1c-2 0-3.500-.3-5.500 0"/><path d="M8 4.500l4 5M12 4.500l-4 5" stroke="#333" stroke-width="1.400"/></svg>文档校对</button><span class="h-6 w-px bg-[#d5d5d5]"></span>
  <button class="ml-3 flex items-center gap-[6px]"><svg class="h-[15px] w-[13px] stroke-[#999]" viewBox="0 0 13 15"><path d="M6.500.5l6 2v6c0 3-3 5-6 6-3-1-6-3-6-6v-6zM3.500 7l2.500 2.500 4-4.500"/></svg>未认证</button>
  <div class="ml-auto flex items-center text-[#333]">
    <button class="flex w-[26px] justify-center" aria-label="全屏"><svg class="size-[14px]" viewBox="0 0 14 14"><path d="M.5 4V.5H4M10 .5h3.500V4M13.500 10v3.500H10M4 13.500H.5V10M8.500 5.500l5-5M5.500 8.500l-5 5"/></svg></button>
    <button class="flex w-[26px] justify-center" aria-label="阅读版式"><svg class="h-[15px] w-4" viewBox="0 0 16 15"><path d="M8 2.500C6 .5 3 1.500.5 1.500v12c2.500 0 5.500-.5 7.500 1 2-1.500 5-1 7.500-1v-12c-2.500 0-5.500-1-7.500 1zv12"/></svg></button>
    <button class="ml-px flex h-6 w-[23px] items-center justify-center rounded-[3px] bg-[#b9b9b9] stroke-[#222]" aria-label="页面视图"><svg class="size-[15px]" viewBox="0 0 15 15"><path d="M1.500.5h8l4 4v9a1 1 0 0 1-1 1h-11a1 1 0 0 1-1-1v-12a1 1 0 0 1 1-1zM9.500.5v4h4M3.500 7.500h7M3.500 10.500h7"/></svg></button>
    <button class="ml-px flex w-[26px] justify-center" aria-label="大纲"><svg class="size-[15px]" viewBox="0 0 15 15"><rect x=".5" y=".5" width="14" height="14" rx="1"/><path d="M3 4.500h2M3 7.500h2M3 10.500h2M6.500 4.500H12M6.500 7.500H12M6.500 10.500H12"/></svg></button>
    <button class="flex w-[26px] justify-center" aria-label="Web版式"><svg class="size-[15px]" viewBox="0 0 15 15"><circle cx="7.500" cy="7.500" r="7"/><ellipse cx="7.500" cy="7.500" rx="3.500" ry="7"/><path d="M7.500.5v14M1 4.500h13M1 10.500h13"/></svg></button>
    <button class="flex w-[26px] justify-center" aria-label="护眼模式"><svg class="size-4" viewBox="0 0 16 16"><ellipse cx="8" cy="10.500" rx="7.500" ry="5"/><circle cx="8" cy="10.500" r="2.500"/><path d="M8 0v3M1.500 2l2 2.500M14.500 2l-2 2.500"/></svg></button>
    <span class="ml-2 h-6 w-px bg-[#d5d5d5]"></span>
    <button class="ml-[11px] flex items-center gap-[6px]">92%<svg class="h-1 w-[5px]"><use href="#caret"/></svg></button>
    <button class="ml-[11px]" aria-label="缩小"><svg class="size-3" viewBox="0 0 12 12" stroke-width="2"><path d="M0 6h12"/></svg></button>
    <input type="range" min="0" max="100" value="43" aria-label="缩放" class="ml-[11px] h-px w-[144px] appearance-none bg-linear-to-r from-[#555] from-43% to-[#aaa] to-43% [&::-webkit-slider-thumb]:size-3 [&::-webkit-slider-thumb]:appearance-none [&::-webkit-slider-thumb]:rounded-full [&::-webkit-slider-thumb]:border [&::-webkit-slider-thumb]:border-[#444] [&::-webkit-slider-thumb]:bg-[#e8e8e8]">
    <button class="ml-[5px]" aria-label="放大"><svg class="size-3" viewBox="0 0 12 12" stroke-width="2"><path d="M0 6h12M6 0v12"/></svg></button>
    <button class="mr-4 ml-[14px]" aria-label="最佳显示"><svg class="size-3" viewBox="0 0 12 12"><path d="M.5 3.500v-3h3M8.500.5h3v3M11.500 8.500v3h-3M3.500 11.500h-3v-3M6 5v2M5 6h2"/></svg></button>
  </div>
  <!-- Site mark -->
  <div class="pointer-events-none absolute right-[10px] bottom-[7px] flex items-center opacity-85">
    <svg class="h-[42px] w-[43px] stroke-none" viewBox="0 0 43 42">
      <defs><linearGradient id="swb" x1="0" y1="1" x2="1" y2="0"><stop offset="0" stop-color="#2f62b0"/><stop offset="1" stop-color="#3fb4ea"/></linearGradient><linearGradient id="swg" x1="0" y1="1" x2="1" y2="0"><stop offset="0" stop-color="#f0c030"/><stop offset=".5" stop-color="#8fcc58"/><stop offset="1" stop-color="#2fae60"/></linearGradient></defs>
      <path d="M43 1C25-1 5 6 1 20c-2 8 2 14 10 14-4-3-5-8-2-13C14 11 28 4 43 1z" fill="url(#swb)"/>
      <path d="M38 4C26 8 14 14 11 22c-1 6 5 9 11 5 3-3 3-6-1-6-2 0-3 1-4 2 1-4 7-5 9-2 1 4-3 9-9 10-6 0-9-4-7-10C13 14 24 8 38 4z" fill="#3a86cf"/>
      <path d="M3 40c11-1 24-5 27-13 1-5-1-8-5-9 5-3 10-3 15-2 4 12-9 30-37 24z" fill="url(#swg)"/>
    </svg>
    <div class="flex flex-col font-['Liberation_Sans','Noto_Sans_CJK_SC',sans-serif]">
      <span class="text-[21px] leading-[24px] font-bold text-[#4a86c8]">极光下载站</span>
      <span class="text-[16px] leading-[19px] font-bold text-[#4dba6c]">www.xz7.com</span>
    </div>
  </div>
</footer>

<script>
  // Horizontal scale: two characters per step, zero at the left margin
  const h = document.getElementById('hruler');
  for (let n = -6; n <= 32; n += 2) {
    if (n === 0) continue;
    const s = document.createElement('span');
    s.className = 'absolute top-0 w-8 -translate-x-1/2 text-center';
    s.style.left = Math.round(124 + n * 14.73) + 'px';
    s.textContent = Math.abs(n);
    h.append(s);
  }
  // Vertical scale: zero at the top margin
  const v = document.getElementById('vruler');
  for (let k = 0; k < 40; k++) {
    const t = document.createElement('i');
    t.className = 'absolute left-[6px] h-px w-[10px] bg-[#999]';
    t.style.top = Math.round(65 + k * 19.08) + 'px';
    v.append(t);
  }
  for (let n = -4; n <= 34; n += 2) {
    if (n === 0 || n === 10) continue;
    const s = document.createElement('span');
    s.className = 'absolute left-0 flex size-4 -translate-y-1/2 -rotate-90 items-center justify-center';
    s.style.top = Math.round(151 + n * 19.1) + 'px';
    s.textContent = Math.abs(n);
    v.append(s);
  }
</script>
</body>
</html>
